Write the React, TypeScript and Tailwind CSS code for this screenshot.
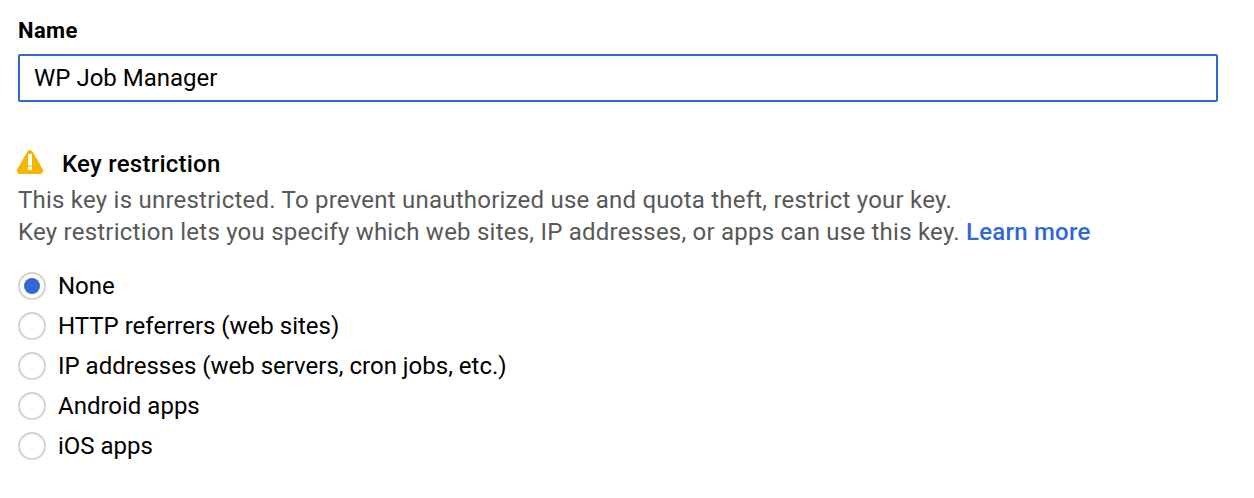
import { useState } from "react";

const RESTRICTIONS = [
  { id: "none", label: "None" },
  { id: "http", label: "HTTP referrers (web sites)" },
  { id: "ip", label: "IP addresses (web servers, cron jobs, etc.)" },
  { id: "android", label: "Android apps" },
  { id: "ios", label: "iOS apps" },
];

function WarningIcon() {
  return (
    <svg width="26" height="24" viewBox="0 0 26 24" aria-hidden="true">
      <path d="M13 3.5 L22.7 20.7 H3.3 Z" fill="#f4b400" stroke="#f4b400" strokeWidth="6.6" strokeLinejoin="round" />
      <path d="M11 4h4v11.5h-4zM11 16.5h4v3.5h-4z" fill="#fff" />
    </svg>
  );
}

export default function App() {
  const [name, setName] = useState("WP Job Manager");
  const [selected, setSelected] = useState("none");

  return (
    <main className="h-[498px] bg-white pl-[18px] pr-9 pt-[15px] font-[Roboto,sans-serif] text-2xl leading-8 text-black">
      <label htmlFor="name" className="block text-[22px] font-bold tracking-[0.4px]">
        Name
      </label>
      <input
        id="name"
        value={name}
        onChange={(e) => setName(e.target.value)}
        className="mt-[7px] block h-12 w-full rounded-[2px] border-2 border-[#3367d6] bg-white px-[14px] outline-none"
      />

      <section className="mt-[46px]">
        <div className="flex h-8 items-center">
          <div className="-ml-px mb-1 mr-[19px]">
            <WarningIcon />
          </div>
          <h2 className="font-medium tracking-[0.01em]">Key restriction</h2>
        </div>
        <p className="mt-1 whitespace-nowrap tracking-[0.23px] text-[#585858]">
          This key is unrestricted. To prevent unauthorized use and quota theft, restrict your key.
          <br />
          Key restriction lets you specify which web sites, IP addresses, or apps can use this key.{" "}
          <a href="#" className="font-medium text-[#3367d6]">
            Learn more
          </a>
        </p>
      </section>

      <div className="mt-[18px]">
        {RESTRICTIONS.map(({ id, label }) => (
          <label key={id} className="flex h-10 items-center">
            <input
              type="radio"
              name="restriction"
              checked={selected === id}
              onChange={() => setSelected(id)}
              className="peer sr-only"
            />
            <span className="mr-3 flex size-7 items-center justify-center rounded-full border-2 border-[#d3d3d3] after:size-4 after:rounded-full peer-checked:after:bg-[#3367d6]" />
            <span>{label}</span>
          </label>
        ))}
      </div>
    </main>
  );
}
